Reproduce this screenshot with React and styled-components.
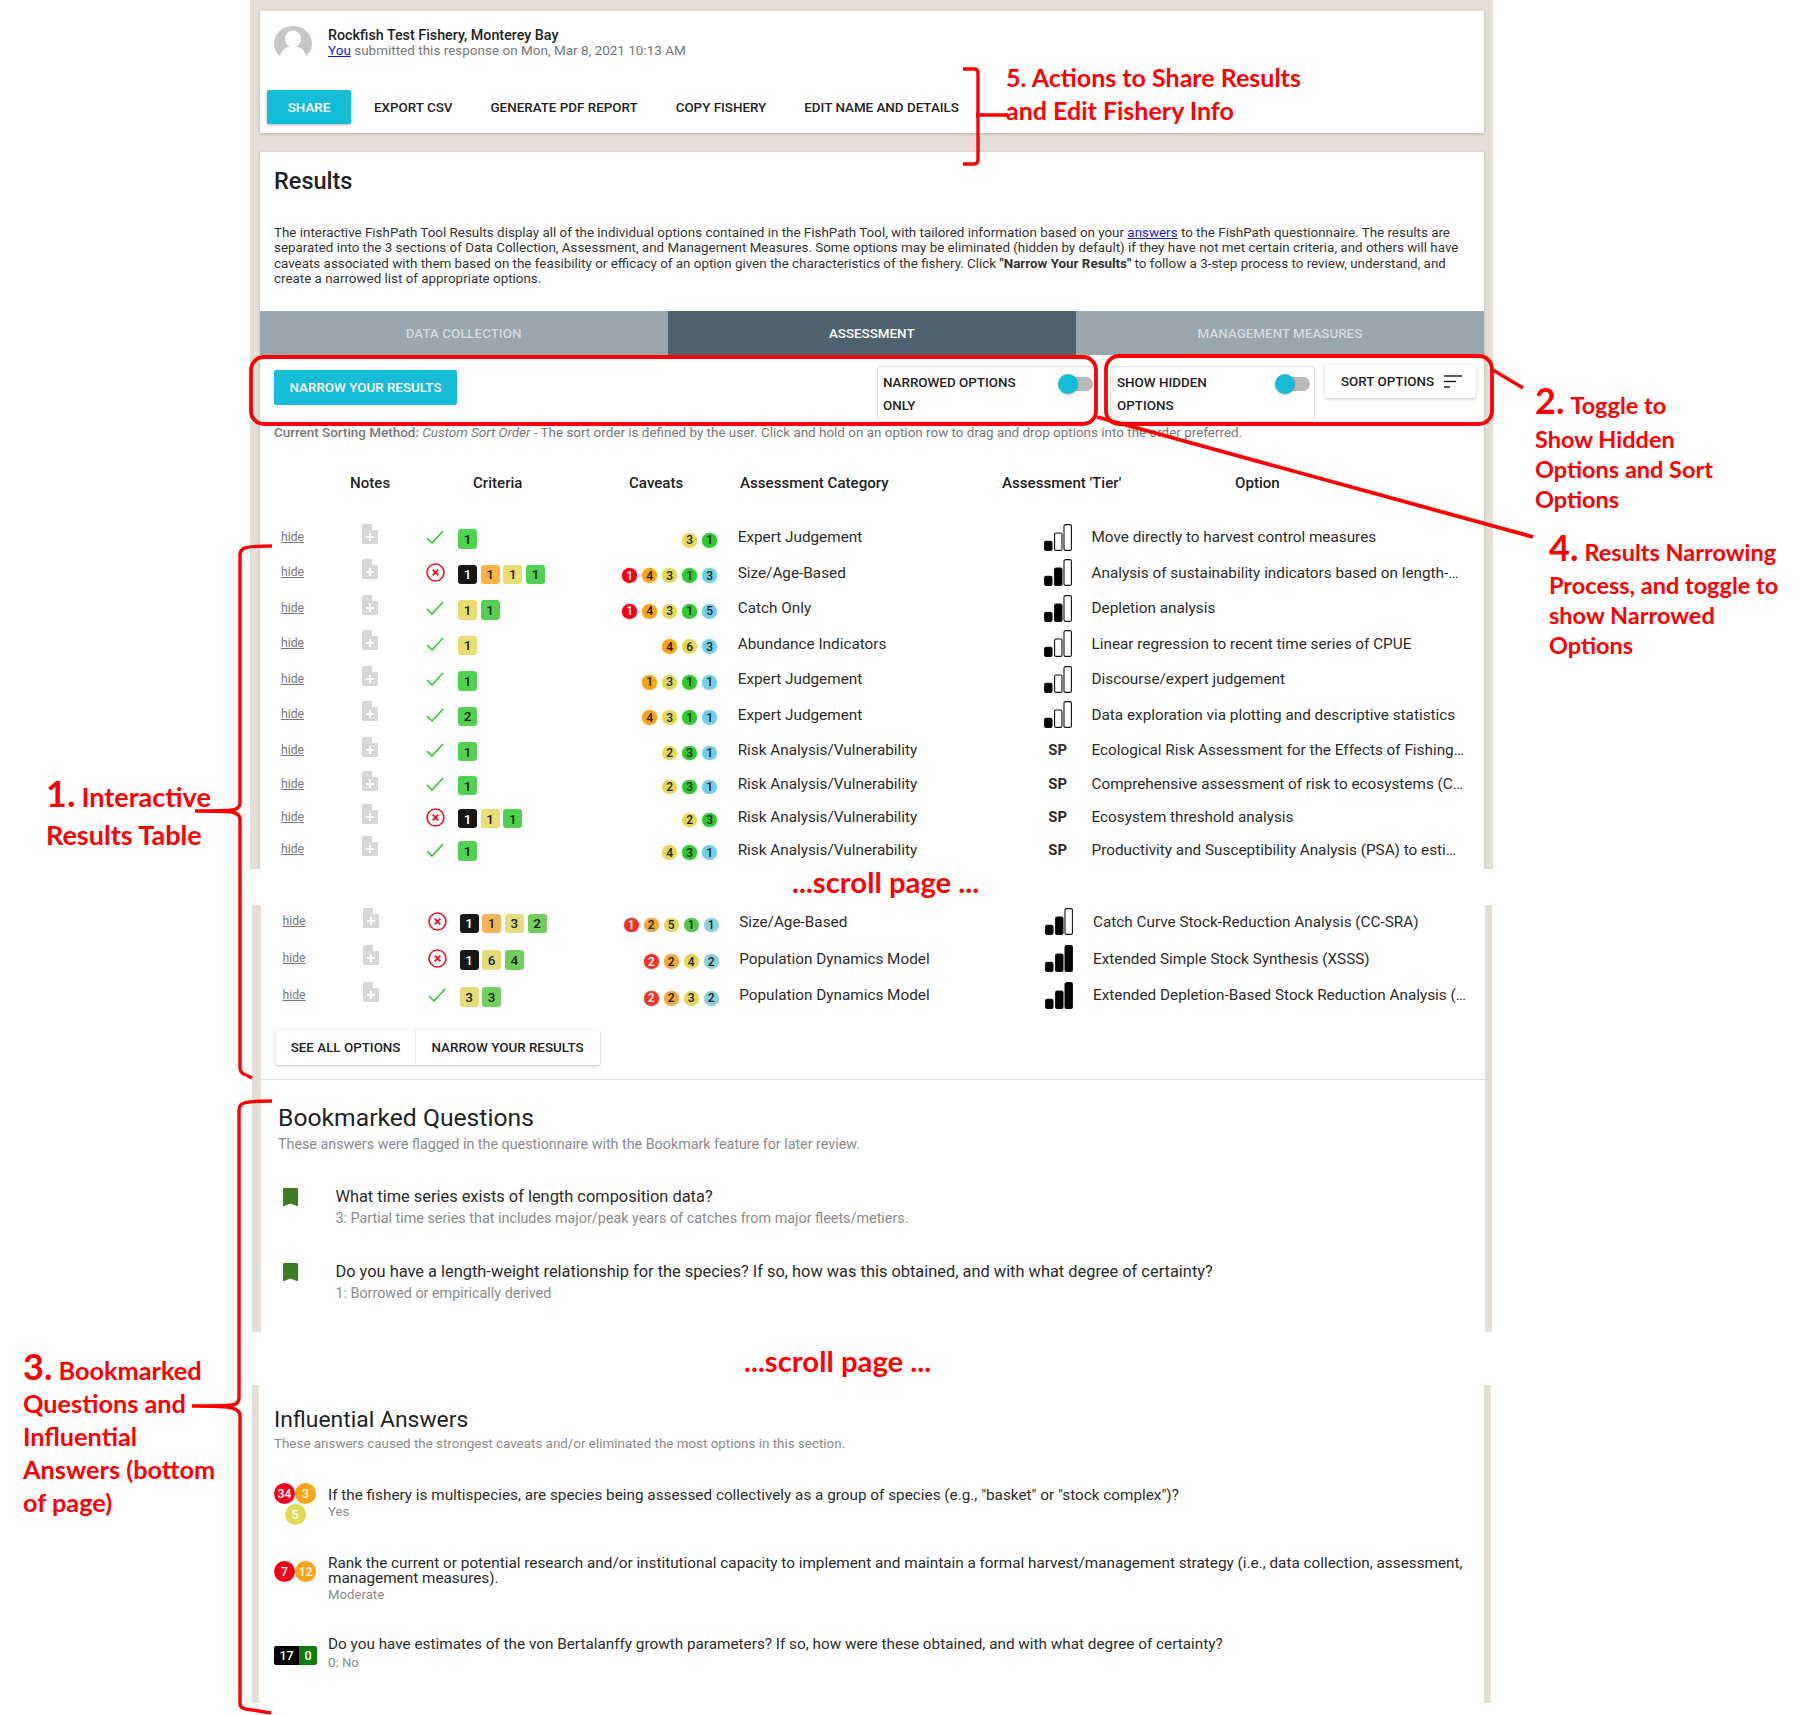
import React from "react";
import styled, { createGlobalStyle } from "styled-components";

const Global = createGlobalStyle`
  html, body { margin: 0; padding: 0; background: #fff; }
  body { font-family: Roboto, "Liberation Sans", sans-serif; color: #222; }
  * { box-sizing: border-box; }
`;

const BEIGE = "#e3dfd8";

const Page = styled.div`
  position: relative;
  width: 1804px;
  height: 1715px;
  overflow: hidden;
  background: #fff;
`;

const Strip = styled.section`
  margin-left: ${(p) => p.$left}px;
  width: ${(p) => p.$width}px;
  height: ${(p) => p.$height}px;
  background: ${BEIGE};
  padding: ${(p) => p.$pad};
  overflow: hidden;
`;

const Card = styled.div`
  background: #fff;
  box-shadow: 0 1px 3px rgba(0, 0, 0, 0.22);
`;

const HeadCard = styled(Card)`
  height: 122px;
  padding: 15px 7.5px 0;
  margin-bottom: 19px;
`;

const Owner = styled.div`
  display: flex;
  align-items: flex-start;
  gap: 16px;
  padding-left: 7px;
  height: 64px;
`;

const OwnerText = styled.div`
  padding-top: 1px;
`;

const OwnerName = styled.div`
  font-size: 14.3px;
  font-weight: 500;
  line-height: 16px;
  color: #222;
`;

const OwnerSub = styled.div`
  font-size: 13.5px;
  line-height: 15px;
  color: #777;
  a { color: #1a1ae0; text-decoration: underline; }
`;

const ActionBar = styled.div`
  display: flex;
  align-items: center;
`;

const PrimaryButton = styled.div`
  display: flex;
  align-items: center;
  justify-content: center;
  width: ${(p) => p.$width}px;
  height: ${(p) => p.$height}px;
  background: #15bcd8;
  color: #fff;
  font-size: 13.4px;
  font-weight: 500;
  border-radius: 2px;
  box-shadow: ${(p) => (p.$flat ? "none" : "0 1px 3px rgba(0,0,0,.3)")};
`;

const TextAction = styled.div`
  font-size: 13.4px;
  font-weight: 500;
  color: #222;
  margin-left: ${(p) => p.$gap}px;
  white-space: nowrap;
`;

const ResultsCard = styled(Card)`
  height: 760px;
`;

const ResultsIntro = styled.div`
  padding: 15px 14.5px 0;
  height: 159px;
`;

const ResultsTitle = styled.h2`
  margin: 0 0 29.5px;
  font-size: 23.5px;
  line-height: 28px;
  font-weight: 500;
  color: #222;
`;

const Lead = styled.p`
  margin: 0;
  font-size: 13.4px;
  line-height: 15.6px;
  color: #333;
  white-space: nowrap;
  a { color: #1a1ae0; text-decoration: underline; }
`;

const Tabs = styled.div`
  display: grid;
  grid-template-columns: repeat(3, 1fr);
  height: 44px;
`;

const Tab = styled.div`
  display: flex;
  align-items: center;
  justify-content: center;
  font-size: 13.4px;
  font-weight: 500;
  background: ${(p) => (p.$active ? "#4f6272" : "#9aa6ad")};
  color: ${(p) => (p.$active ? "#fff" : "#d5dadd")};
`;

const Toolbar = styled.div`
  display: flex;
  align-items: flex-start;
  height: 68px;
  padding-left: 14.5px;
`;

const ToolbarLead = styled.div`
  margin-top: 15px;
  margin-right: 420px;
`;

const ToggleBox = styled.div`
  position: relative;
  margin-top: 11px;
  width: ${(p) => p.$width}px;
  margin-right: ${(p) => p.$mr}px;
  height: 56px;
  border: 1px solid #ddd;
  border-radius: 5px;
  padding: 5px 0 0 ${(p) => p.$pl}px;
  font-size: 13.4px;
  font-weight: 500;
  line-height: 22.5px;
  color: #222;
`;

const ToggleTrack = styled.div`
  position: absolute;
  top: 10px;
  right: ${(p) => p.$right}px;
  width: 30px;
  height: 14px;
  border-radius: 7px;
  background: #b9b9b9;
`;

const ToggleKnob = styled.div`
  position: absolute;
  top: -3px;
  left: -5px;
  width: 20px;
  height: 20px;
  border-radius: 50%;
  background: #15bcd8;
  box-shadow: 0 1px 2px rgba(0, 0, 0, 0.25);
`;

const SortButton = styled.div`
  margin-top: 10px;
  width: 151px;
  height: 33px;
  display: flex;
  align-items: center;
  gap: 10px;
  padding-left: 16px;
  font-size: 13.4px;
  font-weight: 500;
  background: #fff;
  box-shadow: 0 1px 3px rgba(0, 0, 0, 0.25);
  border-radius: 2px;
`;

const SortNote = styled.div`
  padding-left: 14.5px;
  font-size: 13.45px;
  line-height: 20px;
  color: #777;
  white-space: nowrap;
  b { font-weight: 500; }
  i { font-style: italic; }
`;

const TableHead = styled.div`
  display: grid;
  grid-template-columns: 90.5px 123px 156px 111px 262px 233px 1fr;
  height: 76.5px;
  padding-top: 29px;
  font-size: 15.1px;
  font-weight: 500;
  line-height: 22px;
  color: #222;
`;

const HeadCell = styled.div`
  white-space: nowrap;
`;

const Row = styled.div`
  display: grid;
  grid-template-columns: 81.5px 63.5px 32px 279.7px 306px 47.8px 374px;
  align-items: center;
  height: ${(p) => p.$h}px;
  padding-left: 21.5px;
`;

const Hide = styled.span`
  font-size: 12.2px;
  color: #777;
  text-decoration: underline;
`;

const HideCell = styled.div`
  padding-bottom: 4px;
`;

const DocCell = styled.div`
  display: flex;
  margin-left: -1px;
  padding-bottom: 7px;
`;

const MarksCell = styled.div`
  display: flex;
  justify-content: space-between;
  padding-right: 20.7px;
`;

const Badges = styled.div`
  display: flex;
  gap: 3.7px;
  padding-top: 3px;
`;

const Badge = styled.div`
  width: 19px;
  height: 19.5px;
  border-radius: 3px;
  display: flex;
  align-items: center;
  justify-content: center;
  font-size: 13.5px;
  font-weight: 500;
  color: ${(p) => p.$fg};
  background: ${(p) => p.$bg};
`;

const Caveats = styled.div`
  display: flex;
  align-items: center;
  gap: 5.3px;
  padding-top: 6px;
`;

const Dot = styled.div`
  width: 14.7px;
  height: 14.7px;
  border-radius: 50%;
  display: flex;
  align-items: center;
  justify-content: center;
  font-size: 12px;
  font-weight: 500;
  color: ${(p) => p.$fg};
  background: ${(p) => p.$bg};
  box-shadow: 0 0 1px 0.5px ${(p) => p.$bg}55;
`;

const RowText = styled.div`
  font-size: 15.3px;
  line-height: 18px;
  color: #2b2b2b;
  white-space: nowrap;
  overflow: hidden;
  text-overflow: ellipsis;
`;

const TierSP = styled.div`
  width: 28px;
  text-align: center;
  font-size: 14.8px;
  font-weight: 700;
  color: #2b2b2b;
`;

const LowerActions = styled.div`
  margin: 16px 0 14px 14.7px;
  display: inline-flex;
  height: 35px;
  background: #fff;
  box-shadow: 0 1px 3px rgba(0, 0, 0, 0.25);
  border-radius: 2px;
`;

const LowerAction = styled.div`
  display: flex;
  align-items: center;
  padding: 0 ${(p) => p.$pr}px 0 ${(p) => p.$pl}px;
  font-size: 13.4px;
  font-weight: 500;
  color: #222;
  border-left: ${(p) => (p.$divider ? "1px solid #eee" : "none")};
`;

const WhitePanel = styled.div`
  display: flow-root;
  background: #fff;
  height: 100%;
`;

const LowerTable = styled.div`
  margin-top: -1.5px;
`;

const Divider = styled.div`
  border-top: 1px solid #e2e2e2;
`;

const SectionTitle = styled.h3`
  margin: 0;
  font-size: ${(p) => p.$size}px;
  font-weight: 400;
  line-height: 28px;
  color: #222;
`;

const SectionSub = styled.div`
  font-size: ${(p) => p.$size}px;
  line-height: 16px;
  color: #8a8a8a;
  white-space: nowrap;
  margin-top: ${(p) => p.$mt}px;
`;

const SectionHead = styled.div`
  padding: ${(p) => p.$pad};
`;

const Bookmark = styled.div`
  display: grid;
  grid-template-columns: 52.7px 1fr;
  padding-left: 21.7px;
  height: ${(p) => p.$h}px;
`;

const QuestionText = styled.div`
  font-size: ${(p) => p.$size}px;
  line-height: ${(p) => p.$lh}px;
  color: #2b2b2b;
`;

const AnswerText = styled.div`
  font-size: ${(p) => p.$size}px;
  line-height: 16px;
  color: #8a8a8a;
  margin-top: ${(p) => p.$mt}px;
`;

const Influence = styled.div`
  display: grid;
  grid-template-columns: 54px 1fr;
  padding-left: 15px;
  height: ${(p) => p.$h}px;
`;

const InfluenceText = styled.div`
  padding-top: 4.5px;
`;

const Bubbles = styled.div`
  display: flex;
  flex-wrap: wrap;
  justify-content: center;
  width: 42px;
  align-content: flex-start;
  padding-top: ${(p) => p.$pt}px;
`;

const Bubble = styled.div`
  width: 21px;
  height: 21px;
  border-radius: 50%;
  display: flex;
  align-items: center;
  justify-content: center;
  font-size: 12.4px;
  font-weight: 500;
  color: #fff;
  background: ${(p) => p.$bg};
`;

const Split = styled.div`
  display: flex;
  width: 43px;
  height: 19px;
  margin-top: 13.5px;
  border-radius: 2px;
  overflow: hidden;
  font-size: 12.5px;
  font-weight: 500;
  color: #fff;
`;

const SplitPart = styled.div`
  width: ${(p) => p.$w}px;
  background: ${(p) => p.$bg};
  display: flex;
  align-items: center;
  justify-content: center;
`;

const ScrollGap = styled.div`
  height: ${(p) => p.$h}px;
  padding-left: ${(p) => p.$left}px;
  display: flex;
  align-items: center;
`;

const ScrollText = styled.div`
  font-family: Lato, "Open Sans", sans-serif;
  font-weight: 700;
  font-size: 29.3px;
  line-height: 28px;
  color: #f00;
  white-space: nowrap;
  margin-top: ${(p) => p.$mt}px;
`;

const Overlay = styled.svg`
  position: absolute;
  left: 0;
  top: 0;
  pointer-events: none;
`;

const Note = styled.div`
  position: absolute;
  left: ${(p) => p.$x}px;
  top: ${(p) => p.$y}px;
  font-family: Lato, "Open Sans", sans-serif;
  font-weight: 700;
  font-size: ${(p) => p.$size}px;
  line-height: ${(p) => p.$lh}px;
  color: #f00;
  white-space: nowrap;
`;

const NoteHead = styled.div`
  margin-bottom: ${(p) => p.$mb}px;
`;

const NoteNum = styled.span`
  font-size: 36px;
  margin-right: 6px;
`;

const strong = {
  g: ["#50d24e", "#1a1a1a"], k: ["#171717", "#fff"], o: ["#fdb144", "#1a1a1a"], y: ["#e9dc70", "#1a1a1a"],
};
const soft = {
  g: ["#72cf5e", "#1a1a1a"], k: ["#171717", "#fff"], o: ["#f4b25a", "#1a1a1a"], y: ["#e6db7a", "#1a1a1a"],
};
const dotStrong = {
  r: ["#f5001b", "#fff"], o: ["#fca311", "#1a1a1a"], y: ["#e4d955", "#1a1a1a"], g: ["#2ec92e", "#1a1a1a"], b: ["#72cfe6", "#1a1a1a"],
};
const dotSoft = {
  r: ["#e8332a", "#fff"], o: ["#efa83a", "#1a1a1a"], y: ["#e3d65e", "#1a1a1a"], g: ["#56c54f", "#1a1a1a"], b: ["#8cd0e0", "#1a1a1a"],
};

const Avatar = () => (
  <svg width="38" height="35" viewBox="0 0 38 35">
    <ellipse cx="19" cy="17.5" rx="19" ry="17.5" fill="#c6c6c6" />
    <ellipse cx="19" cy="13" rx="8" ry="8.5" fill="#fff" />
    <path d="M5 33 Q7 23 14 21 L24 21 Q31 23 33 33 Q19 39 5 33Z" fill="#fff" />
  </svg>
);

const DocIcon = () => (
  <svg width="16" height="20" viewBox="0 0 16 20">
    <path d="M1.5 0H9.5L16 6.5V18.5Q16 20 14.5 20H1.5Q0 20 0 18.5V1.5Q0 0 1.5 0Z" fill="#d7d7d7" />
    <path d="M10 0.5V6H15.5Z" fill="#fff" />
    <path d="M8 9V17M4 13H12" stroke="#fff" strokeWidth="2" />
  </svg>
);

const Status = ({ ok }) =>
  ok ? (
    <svg width="18" height="14" viewBox="0 0 18 14">
      <path d="M1 8L6 13L17 1" fill="none" stroke="#2fc62f" strokeWidth="1.6" />
    </svg>
  ) : (
    <svg width="19" height="19" viewBox="0 0 19 19">
      <circle cx="9.5" cy="9.5" r="8.5" fill="none" stroke="#f0101f" strokeWidth="1.6" />
      <path d="M6.7 6.7L12.3 12.3M12.3 6.7L6.7 12.3" stroke="#f0101f" strokeWidth="1.8" />
    </svg>
  );

const Tier = ({ level }) => {
  const bars = [
    { x: 0.6, w: 7.4, y: 17.4, h: 9 },
    { x: 10.6, w: 7.4, y: 9, h: 17.4 },
    { x: 20, w: 7.4, y: 0.6, h: 25.8 },
  ];
  return (
    <svg width="28" height="27" viewBox="0 0 28 27">
      {bars.map((b, i) => (
        <rect key={i} x={b.x} y={b.y} width={b.w} height={b.h} rx="1.5" fill={i < level ? "#000" : "#fff"} stroke="#111" strokeWidth="1.1" />
      ))}
    </svg>
  );
};

const BookmarkGlyph = () => (
  <svg width="15" height="18.5" viewBox="0 0 15 18.5">
    <path d="M0 1Q0 0 1 0H14Q15 0 15 1V18.5L7.5 15.5L0 18.5Z" fill="#3d7d24" />
  </svg>
);

const SortGlyph = () => (
  <svg width="18" height="13" viewBox="0 0 18 13">
    <path d="M0 1H18M0 6.5H12M0 12H6" stroke="#222" strokeWidth="1.6" />
  </svg>
);

const upperRows = [
  { ok: 1, b: ["g1"], c: ["y3", "g1"], cat: "Expert Judgement", t: 1, o: "Move directly to harvest control measures", h: 35.5 },
  { ok: 0, b: ["k1", "o1", "y1", "g1"], c: ["r1", "o4", "y3", "g1", "b3"], cat: "Size/Age-Based", t: 2, o: "Analysis of sustainability indicators based on length-based data", h: 35.5 },
  { ok: 1, b: ["y1", "g1"], c: ["r1", "o4", "y3", "g1", "b5"], cat: "Catch Only", t: 2, o: "Depletion analysis", h: 35.5 },
  { ok: 1, b: ["y1"], c: ["o4", "y6", "b3"], cat: "Abundance Indicators", t: 1, o: "Linear regression to recent time series of CPUE", h: 35.5 },
  { ok: 1, b: ["g1"], c: ["o1", "y3", "g1", "b1"], cat: "Expert Judgement", t: 1, o: "Discourse/expert judgement", h: 35.5 },
  { ok: 1, b: ["g2"], c: ["o4", "y3", "g1", "b1"], cat: "Expert Judgement", t: 1, o: "Data exploration via plotting and descriptive statistics", h: 35.5 },
  { ok: 1, b: ["g1"], c: ["y2", "g3", "b1"], cat: "Risk Analysis/Vulnerability", t: 0, o: "Ecological Risk Assessment for the Effects of Fishing (ERAEF)", h: 35 },
  { ok: 1, b: ["g1"], c: ["y2", "g3", "b1"], cat: "Risk Analysis/Vulnerability", t: 0, o: "Comprehensive assessment of risk to ecosystems (CARE)", h: 33 },
  { ok: 0, b: ["k1", "y1", "g1"], c: ["y2", "g3"], cat: "Risk Analysis/Vulnerability", t: 0, o: "Ecosystem threshold analysis", h: 33 },
  { ok: 1, b: ["g1"], c: ["y4", "g3", "b1"], cat: "Risk Analysis/Vulnerability", t: 0, o: "Productivity and Susceptibility Analysis (PSA) to estimate vulnerability", h: 32 },
];

const lowerRows = [
  { ok: 0, b: ["k1", "o1", "y3", "g2"], c: ["r1", "o2", "y5", "g1", "b1"], cat: "Size/Age-Based", t: 2, o: "Catch Curve Stock-Reduction Analysis (CC-SRA)", h: 36.8 },
  { ok: 0, b: ["k1", "y6", "g4"], c: ["r2", "o2", "y4", "b2"], cat: "Population Dynamics Model", t: 3, o: "Extended Simple Stock Synthesis (XSSS)", h: 36.8 },
  { ok: 1, b: ["y3", "g3"], c: ["r2", "o2", "y3", "b2"], cat: "Population Dynamics Model", t: 3, o: "Extended Depletion-Based Stock Reduction Analysis (DBSRA)", h: 36.8 },
];

const OptionRow = ({ r, badgeSet, dotSet }) => (
  <Row $h={r.h}>
    <HideCell><Hide>hide</Hide></HideCell>
    <DocCell><DocIcon /></DocCell>
    <Status ok={r.ok} />
    <MarksCell>
      <Badges>
        {r.b.map((k, i) => (
          <Badge key={i} $bg={badgeSet[k[0]][0]} $fg={badgeSet[k[0]][1]}>{k[1]}</Badge>
        ))}
      </Badges>
      <Caveats>
        {r.c.map((k, i) => (
          <Dot key={i} $bg={dotSet[k[0]][0]} $fg={dotSet[k[0]][1]}>{k[1]}</Dot>
        ))}
      </Caveats>
    </MarksCell>
    <RowText>{r.cat}</RowText>
    {r.t ? <Tier level={r.t} /> : <TierSP>SP</TierSP>}
    <RowText>{r.o}</RowText>
  </Row>
);

export default function App() {
  return (
    <Page>
      <Global />

      <Strip $left={250} $width={1243} $height={869} $pad="11px 9px 0 9.5px">
        <HeadCard>
          <Owner>
            <Avatar />
            <OwnerText>
              <OwnerName>Rockfish Test Fishery, Monterey Bay</OwnerName>
              <OwnerSub><a>You</a> submitted this response on Mon, Mar 8, 2021 10:13 AM</OwnerSub>
            </OwnerText>
          </Owner>
          <ActionBar>
            <PrimaryButton $width={84} $height={34}>SHARE</PrimaryButton>
            <TextAction $gap={23}>EXPORT CSV</TextAction>
            <TextAction $gap={38}>GENERATE PDF REPORT</TextAction>
            <TextAction $gap={38}>COPY FISHERY</TextAction>
            <TextAction $gap={38}>EDIT NAME AND DETAILS</TextAction>
          </ActionBar>
        </HeadCard>

        <ResultsCard>
          <ResultsIntro>
            <ResultsTitle>Results</ResultsTitle>
            <Lead>
              The interactive FishPath Tool Results display all of the individual options contained in the FishPath Tool, with tailored information based on your <a>answers</a> to the FishPath questionnaire. The results are<br />
              separated into the 3 sections of Data Collection, Assessment, and Management Measures. Some options may be eliminated (hidden by default) if they have not met certain criteria, and others will have<br />
              caveats associated with them based on the feasibility or efficacy of an option given the characteristics of the fishery. Click <b>"Narrow Your Results"</b> to follow a 3-step process to review, understand, and<br />
              create a narrowed list of appropriate options.
            </Lead>
          </ResultsIntro>
          <Tabs>
            <Tab>DATA COLLECTION</Tab>
            <Tab $active>ASSESSMENT</Tab>
            <Tab>MANAGEMENT MEASURES</Tab>
          </Tabs>
          <Toolbar>
            <ToolbarLead>
              <PrimaryButton $width={183} $height={35} $flat>NARROW YOUR RESULTS</PrimaryButton>
            </ToolbarLead>
            <ToggleBox $width={218} $mr={15} $pl={5}>
              NARROWED OPTIONS<br />ONLY
              <ToggleTrack $right={1}><ToggleKnob /></ToggleTrack>
            </ToggleBox>
            <ToggleBox $width={205} $mr={10} $pl={6}>
              SHOW HIDDEN<br />OPTIONS
              <ToggleTrack $right={4}><ToggleKnob /></ToggleTrack>
            </ToggleBox>
            <SortButton>SORT OPTIONS<SortGlyph /></SortButton>
          </Toolbar>
          <SortNote>
            <b>Current Sorting Method:</b> <i>Custom Sort Order</i> - The sort order is defined by the user. Click and hold on an option row to drag and drop options into the order preferred.
          </SortNote>
          <TableHead>
            <HeadCell />
            <HeadCell>Notes</HeadCell>
            <HeadCell>Criteria</HeadCell>
            <HeadCell>Caveats</HeadCell>
            <HeadCell>Assessment Category</HeadCell>
            <HeadCell>Assessment 'Tier'</HeadCell>
            <HeadCell>Option</HeadCell>
          </TableHead>
          {upperRows.map((r, i) => (
            <OptionRow key={i} r={r} badgeSet={strong} dotSet={dotStrong} />
          ))}
        </ResultsCard>
      </Strip>

      <ScrollGap $h={36} $left={792}><ScrollText $mt={-11}>...scroll page ...</ScrollText></ScrollGap>

      <Strip $left={252} $width={1240} $height={427} $pad="0 7px 0 9px">
        <WhitePanel>
          <LowerTable>
            {lowerRows.map((r, i) => (
              <OptionRow key={i} r={r} badgeSet={soft} dotSet={dotSoft} />
            ))}
          </LowerTable>
          <LowerActions>
            <LowerAction $pl={15} $pr={15}>SEE ALL OPTIONS</LowerAction>
            <LowerAction $pl={15} $pr={16} $divider>NARROW YOUR RESULTS</LowerAction>
          </LowerActions>
          <Divider />
          <SectionHead $pad="24px 0 36.5px 17px">
            <SectionTitle $size={24.7}>Bookmarked Questions</SectionTitle>
            <SectionSub $size={14.3} $mt={4}>These answers were flagged in the questionnaire with the Bookmark feature for later review.</SectionSub>
          </SectionHead>
          <Bookmark $h={74.5}>
            <BookmarkGlyph />
            <div>
              <QuestionText $size={16.4} $lh={18}>What time series exists of length composition data?</QuestionText>
              <AnswerText $size={14.35} $mt={5}>3: Partial time series that includes major/peak years of catches from major fleets/metiers.</AnswerText>
            </div>
          </Bookmark>
          <Bookmark $h={74.5}>
            <BookmarkGlyph />
            <div>
              <QuestionText $size={16.4} $lh={18}>Do you have a length-weight relationship for the species? If so, how was this obtained, and with what degree of certainty?</QuestionText>
              <AnswerText $size={14.35} $mt={5}>1: Borrowed or empirically derived</AnswerText>
            </div>
          </Bookmark>
        </WhitePanel>
      </Strip>

      <ScrollGap $h={53} $left={744}><ScrollText $mt={5}>...scroll page ...</ScrollText></ScrollGap>

      <Strip $left={252} $width={1239} $height={318} $pad="0 7px 0 7px">
        <WhitePanel>
          <SectionHead $pad="21px 0 31px 15px">
            <SectionTitle $size={22.9}>Influential Answers</SectionTitle>
            <SectionSub $size={13.4} $mt={2}>These answers caused the strongest caveats and/or eliminated the most options in this section.</SectionSub>
          </SectionHead>
          <Influence $h={68}>
            <Bubbles $pt={0}>
              <Bubble $bg="#f5001b">34</Bubble>
              <Bubble $bg="#fca311">3</Bubble>
              <Bubble $bg="#e4d955">5</Bubble>
            </Bubbles>
            <InfluenceText>
              <QuestionText $size={15.3} $lh={15}>If the fishery is multispecies, are species being assessed collectively as a group of species (e.g., "basket" or "stock complex")?</QuestionText>
              <AnswerText $size={13.2} $mt={1}>Yes</AnswerText>
            </InfluenceText>
          </Influence>
          <Influence $h={81}>
            <Bubbles $pt={10}>
              <Bubble $bg="#f5001b">7</Bubble>
              <Bubble $bg="#fca311">12</Bubble>
            </Bubbles>
            <InfluenceText>
              <QuestionText $size={15.3} $lh={15}>Rank the current or potential research and/or institutional capacity to implement and maintain a formal harvest/management strategy (i.e., data collection, assessment, management measures).</QuestionText>
              <AnswerText $size={13.2} $mt={1}>Moderate</AnswerText>
            </InfluenceText>
          </Influence>
          <Influence $h={60}>
            <Split>
              <SplitPart $w={25} $bg="#000">17</SplitPart>
              <SplitPart $w={18} $bg="#0b7d13">0</SplitPart>
            </Split>
            <InfluenceText>
              <QuestionText $size={15.3} $lh={15}>Do you have estimates of the von Bertalanffy growth parameters? If so, how were these obtained, and with what degree of certainty?</QuestionText>
              <AnswerText $size={13.2} $mt={3}>0: No</AnswerText>
            </InfluenceText>
          </Influence>
        </WhitePanel>
      </Strip>

      <Overlay width="1804" height="1715" viewBox="0 0 1804 1715" fill="none" stroke="#f00">
        <path d="M963 69H974Q978 69 978 73V111Q978 115 976 115Q978 115 978 119V160Q978 164 974 164H963M978 115H1008" strokeWidth="3.4" />
        <rect x="251" y="357" width="845" height="67" rx="13" strokeWidth="3.8" />
        <rect x="1106" y="356" width="386" height="68" rx="13" strokeWidth="3.8" />
        <path d="M1493 370L1523 388" strokeWidth="3.4" />
        <path d="M1097 417L1533 537" strokeWidth="3.8" />
        <path d="M272 546Q246 546 243 549Q240 551 240 555V803Q240 809 232 810Q226 811 195 811Q226 811 232 812Q240 814 240 819V1068Q240 1073 246 1075L252 1078" strokeWidth="3.4" />
        <path d="M272 1101Q246 1101 242 1104Q239 1106 239 1111V1398Q239 1404 232 1405Q226 1406 192 1406Q226 1406 232 1408Q240 1410 240 1416V1704Q240 1708 246 1709L271 1713" strokeWidth="3.4" />
      </Overlay>

      <Note $x={1006} $y={61} $size={25} $lh={33}>5. Actions to Share Results<br />and Edit Fishery Info</Note>
      <Note $x={1535} $y={385} $size={23.5} $lh={30}>
        <NoteHead $mb={4}><NoteNum>2.</NoteNum>Toggle to</NoteHead>
        Show Hidden<br />Options and Sort<br />Options
      </Note>
      <Note $x={1549} $y={532} $size={23.5} $lh={30}>
        <NoteHead $mb={3}><NoteNum>4.</NoteNum>Results Narrowing</NoteHead>
        Process, and toggle to<br />show Narrowed<br />Options
      </Note>
      <Note $x={46} $y={774} $size={27} $lh={38}><NoteNum>1.</NoteNum>Interactive<br />Results Table</Note>
      <Note $x={23} $y={1350} $size={25.3} $lh={33}><NoteNum>3.</NoteNum>Bookmarked<br />Questions and<br />Influential<br />Answers (bottom<br />of page)</Note>
    </Page>
  );
}
